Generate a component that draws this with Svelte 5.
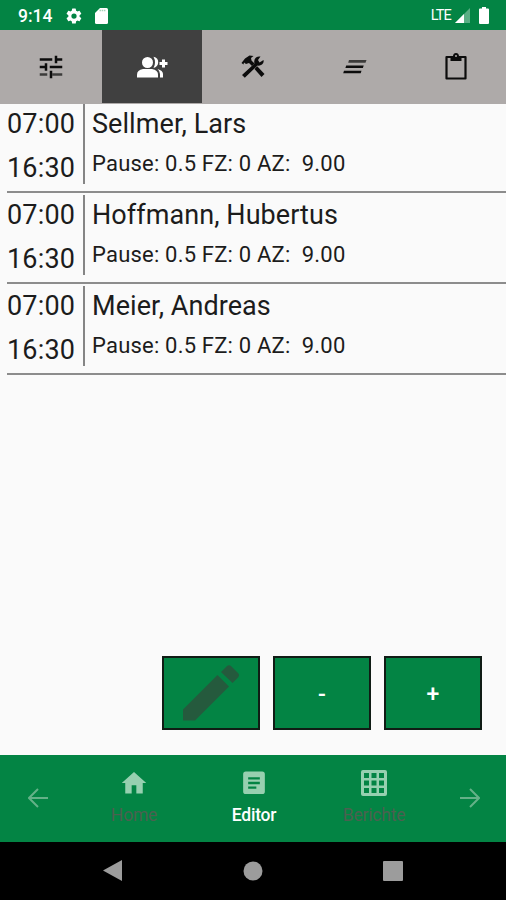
<script lang="ts">
  interface Entry {
    start: string;
    end: string;
    name: string;
    pause: string;
    fz: string;
    az: string;
  }

  let entries: Entry[] = $state([
    { start: '07:00', end: '16:30', name: 'Sellmer, Lars', pause: '0.5', fz: '0', az: '9.00' },
    { start: '07:00', end: '16:30', name: 'Hoffmann, Hubertus', pause: '0.5', fz: '0', az: '9.00' },
    { start: '07:00', end: '16:30', name: 'Meier, Andreas', pause: '0.5', fz: '0', az: '9.00' },
  ]);

  const tabs = ['tune', 'people', 'tools', 'notes', 'clipboard'];
  let activeTab = $state('people');
</script>

<div class="screen">
  <header class="status">
    <span class="clock">9:14</span>
    <svg class="gear" viewBox="0 0 24 24" width="18" height="18">
      <path d="M19.4 13a7.500 7.500 0 0 0 0-2l2.100-1.600a.5.5 0 0 0 .1-.7l-2-3.400a.5.5 0 0 0-.6-.2l-2.500 1a7.300 7.300 0 0 0-1.700-1l-.4-2.600a.5.5 0 0 0-.5-.5h-4a.5.5 0 0 0-.5.500L9 5.100a7.300 7.300 0 0 0-1.700 1l-2.500-1a.5.5 0 0 0-.6.2l-2 3.400a.5.5 0 0 0 .1.7L4.500 11a7.500 7.500 0 0 0 0 2l-2.200 1.600a.5.5 0 0 0-.1.7l2 3.400c.1.200.4.300.6.200l2.500-1a7.300 7.300 0 0 0 1.700 1l.4 2.600c0 .3.200.5.500.5h4c.3 0 .5-.2.500-.5l.4-2.600a7.300 7.300 0 0 0 1.700-1l2.500 1c.2.100.5 0 .6-.2l2-3.400a.5.5 0 0 0-.1-.7zM12 15.500a3.500 3.500 0 1 1 0-7 3.500 3.500 0 0 1 0 7z" />
    </svg>
    <svg class="card" viewBox="0 0 13 16" width="13" height="16">
      <path d="M5 0h6.500Q13 0 13 1.500v13q0 1.500-1.500 1.500h-10Q0 16 0 14.500V5z" />
      <path d="M4.500 2.500h6.500" stroke="#a6d2b9" stroke-width="1.500" stroke-dasharray="1.500 .7" />
    </svg>
    <span class="lte">LTE</span>
    <svg class="signal" viewBox="0 0 15 15" width="15" height="15">
      <path d="M15 0v15H0z" opacity=".35" />
      <path d="M9 6v9H0z" />
    </svg>
    <svg class="battery" viewBox="0 0 10 17" width="10" height="17">
      <path d="M3 0h4v1.500h2q1 0 1 1V16q0 1-1 1H1q-1 0-1-1V2.500q0-1 1-1h2z" />
    </svg>
  </header>

  <nav class="tabs">
    {#each tabs as tab}
      <button class="tab" class:active={tab === activeTab} aria-label={tab} onclick={() => (activeTab = tab)}>
        {#if tab === 'tune'}
          <svg viewBox="0 0 24 24" width="30" height="30">
            <path d="M3 17v2h6v-2zM13 21v-2h8v-2h-8z" opacity=".7" />
            <path d="M3 5v2h10V5zM13 21v-6h-2v6zM7 9v2H3v2h4v2h2V9zm14 4v-2H11v2zm-6-4h2V7h4V5h-4V3h-2z" />
          </svg>
        {:else if tab === 'people'}
          <svg viewBox="0 0 32 24" width="32" height="24">
            <circle cx="11.500" cy="7.500" r="5.500" />
            <path d="M1 22.500v-3q0-4.500 6-5.500h9q6 1 6 5.500v3z" />
            <path d="M17.500 1.800q5 1.200 4.700 5.700-.3 4.400-4.700 5.400 1.500-2.500 1.500-5.400t-1.500-5.700zM21.500 14q5.500 1.500 5.500 5v3.500h-3V19q0-3-2.500-5z" />
            <path d="M26 4.500h3V7h2.500v3H29v2.500h-3V10h-2.500V7H26z" />
          </svg>
        {:else if tab === 'tools'}
          <svg viewBox="0 0 26 24" width="26" height="24">
            <path d="M14.500 14l2.700-2.700 7.300 7.700-3 3z" />
            <path d="M1.500 8L5 3.500 9.500.5l4 .5-2.500 2 .5 2.500 3 3-2.500 2.500-3-3L6 9 4 7.500 3.500 9.500z" />
            <path d="M2 20L14.500 8.500q-1-4 1.500-6 2-1.500 4.500-1L18 5l1.500 2.500 4-2.500q.7 3-1.500 4.500-2 1.500-4.500 1L4.800 22.800z" />
          </svg>
        {:else if tab === 'notes'}
          <svg viewBox="0 0 24 14" width="24" height="14">
            <path d="M6 0h17.500l-1 2.800H5.200z" opacity=".7" />
            <path d="M3.200 5.500h17.500L19.900 8H2.400zM1 10.700h17.500l-.8 2.500H.2z" />
          </svg>
        {:else}
          <svg viewBox="0 0 22 28" width="22" height="28">
            <path d="M1.500 4h19v21.500h-19z" fill="none" stroke="currentColor" stroke-width="2.200" stroke-linejoin="round" />
            <path d="M5.500 3H8q.3-3 3-3t3 3h2.500v5h-11z" />
            <circle cx="11" cy="3" r="1" fill="#aeaaa9" />
          </svg>
        {/if}
      </button>
    {/each}
  </nav>

  <main class="content">
    <ul class="list">
      {#each entries as entry}
        <li class="row">
          <div class="times">
            <span>{entry.start}</span>
            <span>{entry.end}</span>
          </div>
          <div class="info">
            <span class="name">{entry.name}</span>
            <span class="detail">Pause: {entry.pause} FZ: {entry.fz} AZ:&nbsp; {entry.az}</span>
          </div>
        </li>
      {/each}
    </ul>

    <div class="actions">
      <button class="action" aria-label="edit">
        <svg viewBox="0 0 58 58" width="58" height="58">
          <path d="M1 56.500V45.500L35.500 11 47 22.500 13 56.500zM39 8l5.500-5.500q2.500-2.500 5 0l6.500 6.500q2 2 0 4.500L50.500 19z" />
        </svg>
      </button>
      <button class="action"><span>-</span></button>
      <button class="action"><span>+</span></button>
    </div>
  </main>

  <nav class="bottom">
    <svg class="arrow" viewBox="0 0 20 20" width="20" height="20">
      <path d="M20 10H1M10 1L1 10l9 9" />
    </svg>
    <div class="items">
      <div class="item">
        <svg viewBox="0 0 24 24" width="28" height="28">
          <path d="M10 21v-7h4v7h5.500v-9h3L12 2.500 1.500 12h3v9z" />
        </svg>
        <span>Home</span>
      </div>
      <div class="item current">
        <svg viewBox="0 0 24 24" width="28" height="28">
          <path d="M19 2.200H5a2.300 2.300 0 0 0-2.300 2.300v14.700A2.300 2.300 0 0 0 5 21.500h14a2.300 2.300 0 0 0 2.300-2.300V4.500A2.300 2.300 0 0 0 19 2.200zM14 17H7v-2h7zm3-4H7v-2h10zm0-4H7V7h10z" />
        </svg>
        <span>Editor</span>
      </div>
      <div class="item">
        <svg viewBox="0 0 26 26" width="26" height="28">
          <path fill-rule="evenodd" d="M2 0h22q2 0 2 2v22q0 2-2 2H2q-2 0-2-2V2q0-2 2-2zM3 3v5h5V3zm7.500 0v5h5V3zM18 3v5h5V3zM3 10.500v5h5v-5zm7.500 0v5h5v-5zm7.500 0v5h5v-5zM3 18v5h5v-5zm7.500 0v5h5v-5zm7.500 0v5h5v-5z" />
        </svg>
        <span>Berichte</span>
      </div>
    </div>
    <svg class="arrow" viewBox="0 0 20 20" width="20" height="20">
      <path d="M0 10h19M10 1l9 9-9 9" />
    </svg>
  </nav>

  <footer class="system">
    <svg viewBox="0 0 20 22" width="20" height="22"><path d="M19 0v21L0 10.500z" /></svg>
    <svg viewBox="0 0 20 20" width="20" height="20"><circle cx="10" cy="10" r="9.500" /></svg>
    <svg viewBox="0 0 20 20" width="20" height="20"><rect width="20" height="20" rx="1" /></svg>
  </footer>
</div>

<style>
  :global(body) {
    margin: 0;
  }

  .screen {
    width: 506px;
    height: 900px;
    display: flex;
    flex-direction: column;
    overflow: hidden;
    background: #fafafa;
    font-family: Roboto, sans-serif;
    color: #1c1c1c;
  }

  svg {
    display: block;
    fill: currentColor;
    flex: none;
  }

  button {
    border: 0;
    padding: 0;
    font: inherit;
  }

  .status {
    height: 30px;
    box-sizing: border-box;
    padding: 1px 17px 0 18px;
    display: flex;
    align-items: center;
    background: #038444;
    color: #fff;
  }

  .clock {
    width: 47px;
    font-size: 17.5px;
    font-weight: 500;
  }

  .card {
    margin-left: 12px;
  }

  .lte {
    margin-left: auto;
    font-size: 14.5px;
    letter-spacing: -0.8px;
  }

  .signal {
    margin-left: 4px;
    margin-right: 9px;
  }

  .tabs {
    height: 74px;
    display: grid;
    grid-template-columns: repeat(5, 1fr);
    background: #aeaaa9;
  }

  .tab {
    display: flex;
    align-items: center;
    justify-content: center;
    padding-left: 1px;
    background: none;
    color: #0c0c0c;
  }

  .tab.active {
    margin: 0 0 1px 1px;
    padding-left: 0;
    background: #404040;
    color: #fff;
  }

  .content {
    flex: 1;
    display: flex;
    flex-direction: column;
    justify-content: space-between;
  }

  .list {
    margin: 0;
    padding: 0 0 0 7px;
    list-style: none;
  }

  .row {
    height: 91px;
    box-sizing: border-box;
    padding-top: 2px;
    display: flex;
    border-bottom: 2px solid #8c8c8c;
  }

  .row:first-child {
    height: 89px;
    padding-top: 0;
  }

  .times {
    width: 76px;
    height: 80px;
    display: flex;
    flex-direction: column;
    border-right: 2px solid #858585;
    font-size: 27px;
    line-height: 44px;
    letter-spacing: 0.2px;
  }

  .times span {
    margin-top: -2px;
    margin-bottom: 2px;
  }

  .info {
    padding-left: 7px;
    display: flex;
    flex-direction: column;
  }

  .name {
    margin-top: -2px;
    font-size: 27px;
    line-height: 44px;
    letter-spacing: 0.07px;
  }

  .detail {
    font-size: 22px;
    line-height: 36px;
    letter-spacing: 0.2px;
  }

  .actions {
    display: flex;
    justify-content: flex-end;
    gap: 13px;
    padding: 0 24px 25px 0;
  }

  .action {
    width: 98px;
    height: 74px;
    display: flex;
    align-items: center;
    justify-content: center;
    border: 2px solid #101c15;
    background: #038444;
    color: #fff;
    font-size: 23px;
    font-weight: 500;
  }

  .action span {
    padding-top: 3px;
  }

  .action svg {
    color: #255a3d;
  }

  .bottom {
    height: 87px;
    box-sizing: border-box;
    padding: 0 26px 2px 28px;
    display: flex;
    align-items: center;
    justify-content: space-between;
    background: #038444;
  }

  .arrow {
    fill: none;
    stroke: #64b188;
    stroke-width: 2;
  }

  .items {
    width: 360px;
    display: flex;
  }

  .item {
    flex: 1;
    height: 57px;
    display: flex;
    flex-direction: column;
    align-items: center;
    justify-content: space-between;
    color: #4a6150;
    font-size: 17.5px;
    line-height: 22px;
    letter-spacing: -0.2px;
  }

  .item svg {
    color: #97d0b0;
  }

  .item.current {
    color: #fff;
    font-weight: 500;
  }

  .system {
    height: 58px;
    box-sizing: border-box;
    padding: 0 103px;
    display: flex;
    align-items: center;
    justify-content: space-between;
    background: #000;
    color: #9c9c9c;
  }
</style>
